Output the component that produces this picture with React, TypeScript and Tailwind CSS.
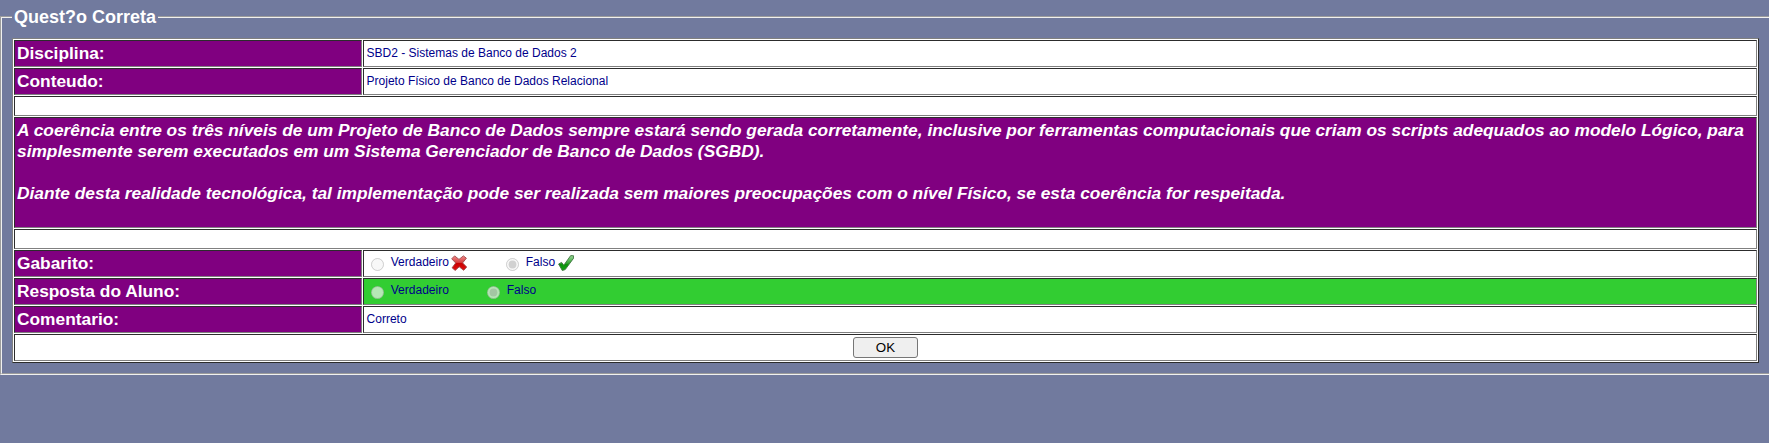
import type { ReactNode } from 'react';

const bevel = 'border border-t-[#2c2c2c] border-l-[#2c2c2c] border-r-[#808080] border-b-[#808080]';

function Field({ label, children, tone = 'bg-white' }: { label: string; children: ReactNode; tone?: string }) {
  return (
    <div className="flex h-[27px] gap-px">
      <div className={`${bevel} w-[348px] shrink-0 bg-[purple] px-0.5 text-[17.33px] leading-[25px] font-bold text-white`}>
        {label}
      </div>
      <div className={`${bevel} ${tone} flex-1 pl-[2.6px] text-[12px] leading-[24px] text-[#00008b]`}>{children}</div>
    </div>
  );
}

function Blank() {
  return <div className={`${bevel} h-5 bg-white`} />;
}

function Option({ name, label, checked = false }: { name: string; label: string; checked?: boolean }) {
  return (
    <span className="flex h-[22px] items-start">
      <input
        type="radio"
        name={name}
        disabled
        defaultChecked={checked}
        className="mt-[7px] mr-[6.6px] ml-[4.6px] h-[13px] w-[13px] shrink-0"
      />
      <span className="leading-[22px]">{label}</span>
    </span>
  );
}

function Cross() {
  return (
    <svg className="mt-[4px] ml-[2.6px] h-4 w-4" viewBox="0 0 16 16">
      <defs>
        <linearGradient id="red" x1="0" y1="0" x2="0" y2="1">
          <stop offset="0" stopColor="#ef8a8a" />
          <stop offset=".45" stopColor="#d84040" />
          <stop offset=".5" stopColor="#c80000" />
          <stop offset="1" stopColor="#e01010" />
        </linearGradient>
      </defs>
      <path
        d="M.7 3.8 3.6.9 8 4.4 12.4.9l3 2.3-3.8 4.7 4.1 4.2-3 3.2L8.2 11.8 4.2 15.4l-3.1-2.6 3.6-4.8z"
        fill="url(#red)"
        stroke="#9c4848"
        strokeWidth=".9"
        strokeLinejoin="round"
      />
    </svg>
  );
}

function Check() {
  return (
    <svg className="mt-[4px] ml-[2.6px] h-4 w-4" viewBox="0 0 16 16">
      <defs>
        <linearGradient id="green" x1="0" y1="0" x2="0" y2="1">
          <stop offset="0" stopColor="#9bd79b" />
          <stop offset=".5" stopColor="#35a535" />
          <stop offset=".6" stopColor="#0a920a" />
          <stop offset="1" stopColor="#17a317" />
        </linearGradient>
      </defs>
      <path
        d="M.6 9 3.6 7.4l2.2 2.8L12.7.6l2.9.2v2.4L7.2 14.6l-2.9.9z"
        fill="url(#green)"
        stroke="#3d743d"
        strokeWidth=".9"
        strokeLinejoin="round"
      />
    </svg>
  );
}

export default function App() {
  return (
    <div className="h-[443px] overflow-hidden bg-[#717a9e] pt-[7px] font-['Liberation_Sans',Arial,sans-serif]">
      <fieldset className="h-[368px] w-[1771px] border-2 border-[#f0f0f0] px-[10px] [border-style:groove]">
        <legend className="px-[2px] text-[18px] leading-5 font-bold text-white">Quest?o Correta</legend>
        <div className="mt-[11px] flex w-[1747px] flex-col gap-px border border-t-[#808080] border-r-[#2c2c2c] border-b-[#2c2c2c] border-l-[#808080] bg-white p-px">
          <Field label="Disciplina:">SBD2 - Sistemas de Banco de Dados 2</Field>
          <Field label="Conteudo:">Projeto Físico de Banco de Dados Relacional</Field>
          <Blank />
          <div className={`${bevel} h-[111px] bg-[purple] px-0.5 pt-[2px] text-[17.33px] leading-[21px] font-bold text-white italic`}>
            <p>
              A coerência entre os três níveis de um Projeto de Banco de Dados sempre estará sendo gerada corretamente,
              inclusive por ferramentas computacionais que criam os scripts adequados ao modelo Lógico, para
              <br />
              simplesmente serem executados em um Sistema Gerenciador de Banco de Dados (SGBD).
            </p>
            <p className="mt-[21px]">
              Diante desta realidade tecnológica, tal implementação pode ser realizada sem maiores preocupações com o
              nível Físico, se esta coerência for respeitada.
            </p>
          </div>
          <Blank />
          <Field label="Gabarito:">
            <div className="flex h-[22px]">
              <div className="flex w-[135px]">
                <Option name="key" label="Verdadeiro" />
                <Cross />
              </div>
              <Option name="key" label="Falso" checked />
              <Check />
            </div>
          </Field>
          <Field label="Resposta do Aluno:" tone="bg-[limegreen]">
            <div className="flex h-[22px]">
              <div className="w-[116px]">
                <Option name="answer" label="Verdadeiro" />
              </div>
              <Option name="answer" label="Falso" checked />
            </div>
          </Field>
          <Field label="Comentario:">Correto</Field>
          <div className={`${bevel} flex h-[27px] justify-center bg-white pt-[2px]`}>
            <button
              type="button"
              className="h-[21px] w-[65px] rounded-[3px] border border-[#767676] bg-[#efefef] text-[13.33px] leading-[19px] text-black"
            >
              OK
            </button>
          </div>
        </div>
      </fieldset>
    </div>
  );
}
